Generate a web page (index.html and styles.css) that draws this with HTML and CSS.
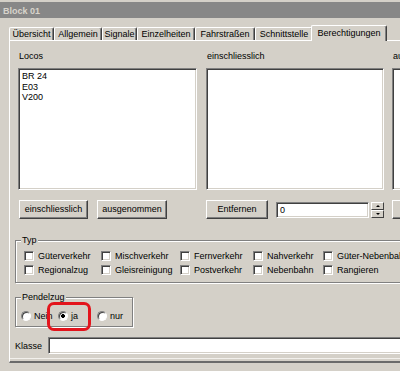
FILE: index.html
```html
<!DOCTYPE html>
<html>
<head>
<meta charset="utf-8">
<title>Block 01</title>
<link rel="stylesheet" href="styles.css">
</head>
<body>
<div class="window">
  <div class="title">Block 01</div>
  <div class="tabs">
    <div class="tab t1">Übersicht</div>
    <div class="tab t2">Allgemein</div>
    <div class="tab t3">Signale</div>
    <div class="tab t4">Einzelheiten</div>
    <div class="tab t5">Fahrstraßen</div>
    <div class="tab t6">Schnittstelle</div>
    <div class="tab active">Berechtigungen</div>
  </div>
  <div class="panel">
    <div class="cols">
      <div class="col c1">
        <div class="lbl">Locos</div>
        <div class="list">
          <div>BR 24</div>
          <div>E03</div>
          <div>V200</div>
        </div>
        <div class="btnrow">
          <div class="btn b-ein">einschliesslich</div>
          <div class="btn b-aus">ausgenommen</div>
        </div>
      </div>
      <div class="col c2">
        <div class="lbl">einschliesslich</div>
        <div class="list"></div>
        <div class="btnrow">
          <div class="btn b-ent">Entfernen</div>
          <div class="field num">0</div>
          <div class="spin">
            <div class="spinbtn"><span class="arrow up"></span></div>
            <div class="spinbtn"><span class="arrow down"></span></div>
          </div>
        </div>
      </div>
      <div class="col c3">
        <div class="lbl">ausgenommen</div>
        <div class="list"></div>
        <div class="btnrow">
          <div class="btn b-ent">Entfernen</div>
        </div>
      </div>
    </div>

    <fieldset class="group typ">
      <legend>Typ</legend>
      <div class="checks">
        <div class="chk"><span class="box"></span>Güterverkehr</div>
        <div class="chk"><span class="box"></span>Mischverkehr</div>
        <div class="chk"><span class="box"></span>Fernverkehr</div>
        <div class="chk"><span class="box"></span>Nahverkehr</div>
        <div class="chk"><span class="box"></span>Güter-Nebenbahn</div>
        <div class="chk"><span class="box"></span>Regionalzug</div>
        <div class="chk"><span class="box"></span>Gleisreinigung</div>
        <div class="chk"><span class="box"></span>Postverkehr</div>
        <div class="chk"><span class="box"></span>Nebenbahn</div>
        <div class="chk"><span class="box"></span>Rangieren</div>
      </div>
    </fieldset>

    <fieldset class="group pendel">
      <legend>Pendelzug</legend>
      <div class="radios">
        <div class="rad r1"><span class="dot"></span>Nein</div>
        <div class="rad r2"><span class="dot on"></span>ja</div>
        <div class="rad r3"><span class="dot"></span>nur</div>
      </div>
    </fieldset>

    <div class="klasse">
      <span class="klbl">Klasse</span>
      <div class="field wide"></div>
    </div>
  </div>
</div>
<div class="highlight"></div>
</body>
</html>
```

FILE: styles.css
```css
* { box-sizing: border-box; }
html, body { margin: 0; padding: 0; }
body {
  width: 400px;
  height: 371px;
  overflow: hidden;
  position: relative;
  background: #d4d0c8;
  font-family: "Liberation Sans", Arial, sans-serif;
  font-size: 9px;
  color: #000;
}
.window { width: 600px; }

.title {
  margin-top: 2px;
  height: 16px;
  width: 400px;
  background: #878787;
  color: #d8d4cc;
  font-weight: bold;
  line-height: 18px;
  padding-left: 3px;
}

.tabs {
  display: flex;
  align-items: flex-end;
  margin-top: 7px;
  height: 15px;
  padding-left: 9px;
}
.tab {
  flex: none;
  height: 13px;
  border-top: 1px solid #fff;
  border-left: 1px solid #fff;
  border-right: 1px solid #404040;
  box-shadow: inset -1px 0 #808080;
  border-radius: 2px 2px 0 0;
  text-align: center;
  line-height: 12px;
  white-space: nowrap;
}
.t1 { width: 45px; }
.t2 { width: 48px; }
.t3 { width: 35px; }
.t4 { width: 58px; }
.t5 { width: 60px; }
.t6 { width: 58px; }
.tab.active {
  position: relative;
  z-index: 1;
  height: 16px;
  width: 76px;
  margin-left: -2px;
  margin-bottom: -1px;
  padding-top: 1px;
  background: #d4d0c8;
}

.panel {
  margin-left: 9px;
  width: 560px;
  height: 323px;
  border-top: 1px solid #fff;
  border-left: 1px solid #fff;
  border-bottom: 2px solid #6a6a6a;
  box-shadow: inset 0 -2px #d4d0c8, inset 0 -3px #f2f0ec;
  padding: 10px 0 0 5px;
}

.cols { display: flex; padding-left: 3px; }
.col { flex: none; }
.c1 { width: 179px; }
.c2 { width: 178px; margin-left: 9px; }
.c3 { width: 170px; margin-left: 8px; }

.lbl {
  height: 11px;
  line-height: 11px;
  padding-left: 1px;
  margin-bottom: 6px;
  white-space: nowrap;
}

.list, .field, .box {
  background: #fff;
  border: 1px solid;
  border-color: #808080 #fff #fff #808080;
  box-shadow: inset 1px 1px #404040, inset -1px -1px #d4d0c8;
}
.list {
  height: 122px;
  padding: 2px 3px;
  line-height: 10.5px;
}

.btnrow {
  display: flex;
  margin-top: 10px;
  height: 19px;
}
.btn {
  flex: none;
  height: 19px;
  border: 1px solid;
  border-color: #fff #404040 #404040 #fff;
  box-shadow: inset -1px -1px #808080;
  text-align: center;
  line-height: 17px;
  white-space: nowrap;
}
.b-ein { width: 69px; margin-left: 1px; }
.b-aus { width: 70px; margin-left: 9px; }
.b-ent { width: 62px; }

.num {
  flex: none;
  width: 93px;
  height: 16px;
  margin: 2px 0 0 8px;
  padding-left: 3px;
  line-height: 14px;
}
.spin {
  flex: none;
  display: flex;
  flex-direction: column;
  width: 13px;
  height: 16px;
  margin: 2px 0 0 2px;
}
.spinbtn {
  flex: 1;
  display: flex;
  align-items: center;
  justify-content: center;
  border: 1px solid;
  border-color: #fff #404040 #404040 #fff;
  background: #d4d0c8;
}
.arrow {
  width: 0;
  height: 0;
  border-left: 2px solid transparent;
  border-right: 2px solid transparent;
}
.arrow.up { border-bottom: 2px solid #000; }
.arrow.down { border-top: 2px solid #000; }

.group {
  margin: 0;
  padding: 0;
  min-inline-size: 0;
  border: 1px solid #808080;
  box-shadow: inset 1px 1px #fff, 1px 1px #fff;
}
.group legend {
  padding: 0 1px;
  line-height: 11px;
  background: #d4d0c8;
}
.typ {
  width: 470px;
  margin-top: 16px;
  padding: 3px 0 5px 8px;
}
.typ legend { margin-left: -3px; }

.checks {
  display: grid;
  grid-template-columns: 77px 79px 73px 70px 120px;
  grid-auto-rows: 14px;
  align-items: center;
}
.chk {
  display: flex;
  align-items: center;
  white-space: nowrap;
}
.box {
  width: 10px;
  height: 10px;
  margin-right: 4px;
  flex: none;
}

.pendel {
  width: 118px;
  margin-top: 9px;
  padding: 6px 0 3px 5px;
}
.pendel legend { margin-left: 0; }
.radios { display: flex; height: 14px; }
.rad {
  display: flex;
  align-items: center;
  white-space: nowrap;
}
.r1 { width: 37px; }
.r2 { width: 39px; }
.dot {
  flex: none;
  width: 10px;
  height: 10px;
  margin-right: 3px;
  border-radius: 50%;
  border: 1px solid;
  border-color: #808080 #fff #fff #808080;
  box-shadow: inset 1px 1px #404040;
  background: #fff;
}
.dot.on {
  background: radial-gradient(circle, #000 0 1.6px, #fff 2.2px);
}

.klasse {
  display: flex;
  align-items: center;
  margin-top: 10px;
}
.klbl { width: 33px; }
.wide {
  width: 400px;
  height: 17px;
}

.highlight {
  position: absolute;
  left: 47px;
  top: 302px;
  width: 44px;
  height: 29px;
  border: 3px solid #e3141c;
  border-radius: 7px;
}
```
